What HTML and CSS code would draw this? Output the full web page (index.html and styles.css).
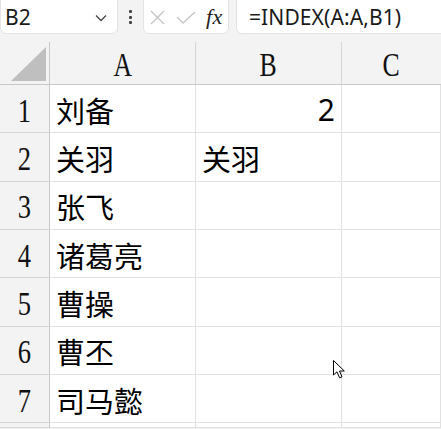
FILE: index.html
```html
<!DOCTYPE html>
<html>
<head>
<meta charset="utf-8">
<link rel="stylesheet" href="styles.css">
</head>
<body>
<div class="toolbar">
  <div class="namebox">
    <span class="ref">B2</span>
    <svg class="chev" width="12" height="8" viewBox="0 0 12 8"><path d="M1 1.5 L6 6.5 L11 1.5" fill="none" stroke="#444" stroke-width="1.3"/></svg>
  </div>
  <div class="dots"><i></i><i></i><i></i></div>
  <div class="fxbox">
    <svg width="15" height="15" viewBox="0 0 15 15"><path d="M1 1 L14 14 M14 1 L1 14" stroke="#c4c4c4" stroke-width="1.3" fill="none"/></svg>
    <svg width="20" height="13" viewBox="0 0 20 13"><path d="M1 6 L7 12 L19 1" stroke="#c4c4c4" stroke-width="1.3" fill="none"/></svg>
    <span class="fx">fx</span>
  </div>
  <div class="formula">=INDEX(A:A,B1)</div>
</div>
<div class="sheet">
  <div class="corner"><svg width="35" height="34" viewBox="0 0 35 34"><polygon points="0,34 35,0 35,34" fill="#bfbfbf"/></svg></div>
  <div class="colhead"><span>A</span></div>
  <div class="colhead"><span>B</span></div>
  <div class="colhead last"><span>C</span></div>

  <div class="rowhead"><span>1</span></div>
  <div class="cell">刘备</div>
  <div class="cell num">2</div>
  <div class="cell"></div>

  <div class="rowhead"><span>2</span></div>
  <div class="cell">关羽</div>
  <div class="cell">关羽</div>
  <div class="cell"></div>

  <div class="rowhead"><span>3</span></div>
  <div class="cell">张飞</div>
  <div class="cell"></div>
  <div class="cell"></div>

  <div class="rowhead"><span>4</span></div>
  <div class="cell">诸葛亮</div>
  <div class="cell"></div>
  <div class="cell"></div>

  <div class="rowhead"><span>5</span></div>
  <div class="cell">曹操</div>
  <div class="cell"></div>
  <div class="cell"></div>

  <div class="rowhead"><span>6</span></div>
  <div class="cell">曹丕</div>
  <div class="cell"></div>
  <div class="cell"></div>

  <div class="rowhead"><span>7</span></div>
  <div class="cell">司马懿</div>
  <div class="cell"></div>
  <div class="cell"></div>

  <div class="rowhead"></div>
  <div class="cell"></div>
  <div class="cell"></div>
  <div class="cell"></div>
</div>
<svg class="cursor" width="14" height="20" viewBox="0 0 14 20">
  <path d="M0.5 0.5 L0.5 15 L4 11.8 L6.6 17.8 L9 16.8 L6.5 11 L11.3 11 Z" fill="#fff" stroke="#000" stroke-width="1"/>
</svg>
</body>
</html>
```

FILE: styles.css
```css
html, body {
  margin: 0;
  padding: 0;
  background: #f3f3f3;
  width: 441px;
  height: 429px;
  overflow: hidden;
  position: relative;
}
.toolbar {
  display: flex;
  height: 34px;
  align-items: flex-start;
}
.namebox {
  box-sizing: border-box;
  width: 118px;
  height: 40px;
  margin-top: -6px;
  background: #fff;
  border: 1px solid #e3e3e3;
  border-radius: 6px;
  display: flex;
  align-items: center;
  padding: 6px 6px 0 4px;
}
.ref {
  font-family: "Noto Sans", "Open Sans", sans-serif;
  font-size: 21px;
  color: #1a1a1a;
  flex: 1;
}
.chev { margin-right: 4px; margin-top: 2px; }
.dots {
  width: 25px;
  height: 34px;
  display: flex;
  flex-direction: column;
  align-items: center;
  justify-content: center;
  gap: 2.5px;
}
.dots i {
  display: block;
  width: 3px;
  height: 3px;
  background: #444;
  border-radius: 1px;
}
.fxbox {
  box-sizing: border-box;
  width: 86px;
  height: 40px;
  margin-top: -6px;
  background: #fff;
  border: 1px solid #e3e3e3;
  border-radius: 6px;
  display: flex;
  align-items: center;
  padding: 6px 0 0 6px;
  gap: 11px;
}
.fx {
  font-family: "Liberation Serif", serif;
  font-style: italic;
  font-size: 22px;
  color: #222;
  margin-left: -1px;
  letter-spacing: 0.5px;
}
.formula {
  box-sizing: border-box;
  flex: 1;
  margin-left: 7px;
  margin-right: -10px;
  height: 40px;
  margin-top: -6px;
  background: #fff;
  border: 1px solid #e3e3e3;
  border-radius: 6px;
  padding: 5px 0 0 12px;
  font-family: "Noto Sans", "Open Sans", sans-serif;
  font-size: 21px;
  letter-spacing: 0.1px;
  color: #1a1a1a;
  line-height: 34px;
}
.sheet {
  margin-top: 8px;
  display: grid;
  grid-template-columns: 50px 146px 146px 1fr;
  grid-template-rows: 43px repeat(7, 48.33px) 5px;
}
.corner {
  border-right: 1px solid #c8c8c8;
  border-bottom: 1px solid #c8c8c8;
  display: flex;
  align-items: flex-end;
  justify-content: flex-end;
  padding: 0 3px 3px 0;
}
.colhead {
  border-right: 1px solid #d6d6d6;
  border-bottom: 1px solid #c8c8c8;
  display: flex;
  align-items: center;
  justify-content: center;
  padding-top: 4px;
  font-family: "Liberation Serif", serif;
  font-size: 33px;
  color: #111;
}
.colhead.last { border-right: none; }
.colhead span, .rowhead span {
  display: inline-block;
  transform: scaleX(0.78);
}
.rowhead {
  border-right: 1px solid #c8c8c8;
  border-bottom: 1px solid #d6d6d6;
  display: flex;
  align-items: center;
  justify-content: center;
  padding-top: 4px;
  font-family: "Liberation Serif", serif;
  font-size: 34px;
  color: #111;
}
.cell {
  background: #fff;
  border-right: 1px solid #e1e1e1;
  border-bottom: 1px solid #e1e1e1;
  display: flex;
  align-items: center;
  padding: 2px 6px 0 6px;
  font-family: "Noto Sans CJK SC", "Noto Sans", sans-serif;
  font-size: 29px;
  color: #000;
  white-space: nowrap;
  overflow: hidden;
}
.cell.num {
  justify-content: flex-end;
  font-family: "Noto Sans", sans-serif;
  font-size: 30px;
}
.cursor {
  position: absolute;
  left: 333px;
  top: 360px;
}
```
